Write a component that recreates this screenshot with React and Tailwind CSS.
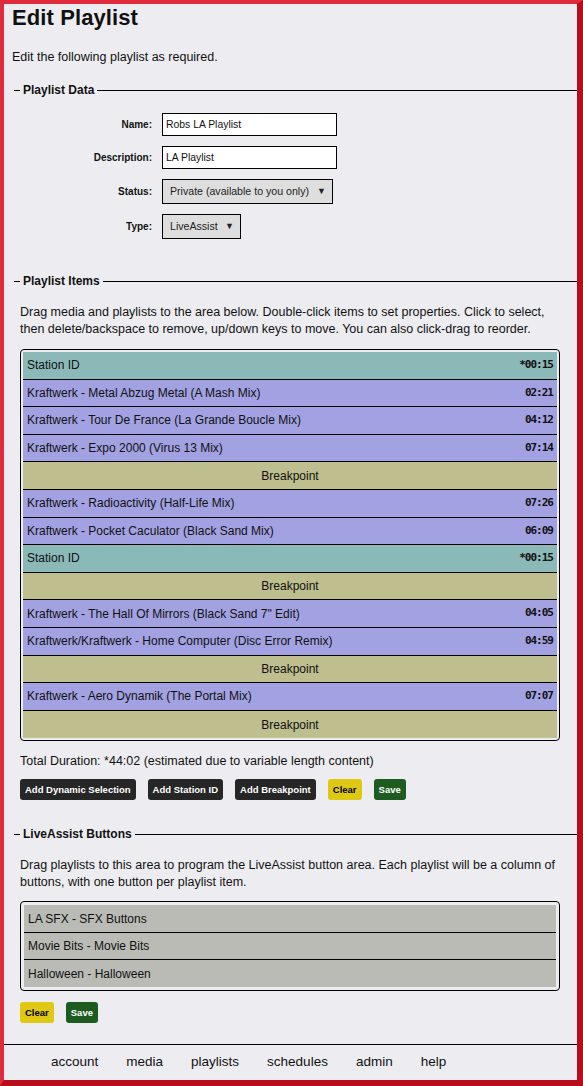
const ITEMS = [
  { kind: "id", title: "Station ID", dur: "*00:15" },
  { kind: "media", title: "Kraftwerk - Metal Abzug Metal (A Mash Mix)", dur: "02:21" },
  { kind: "media", title: "Kraftwerk - Tour De France (La Grande Boucle Mix)", dur: "04:12" },
  { kind: "media", title: "Kraftwerk - Expo 2000 (Virus 13 Mix)", dur: "07:14" },
  { kind: "break", title: "Breakpoint" },
  { kind: "media", title: "Kraftwerk - Radioactivity (Half-Life Mix)", dur: "07:26" },
  { kind: "media", title: "Kraftwerk - Pocket Caculator (Black Sand Mix)", dur: "06:09" },
  { kind: "id", title: "Station ID", dur: "*00:15" },
  { kind: "break", title: "Breakpoint" },
  { kind: "media", title: "Kraftwerk - The Hall Of Mirrors (Black Sand 7\" Edit)", dur: "04:05" },
  { kind: "media", title: "Kraftwerk/Kraftwerk - Home Computer (Disc Error Remix)", dur: "04:59" },
  { kind: "break", title: "Breakpoint" },
  { kind: "media", title: "Kraftwerk - Aero Dynamik (The Portal Mix)", dur: "07:07" },
  { kind: "break", title: "Breakpoint" }
];

const ROW_BG = {
  id: "bg-[#8bb9b8]",
  media: "bg-[#a2a2e2]",
  break: "bg-[#bebe8e]"
};

const LA_ROWS = ["LA SFX - SFX Buttons", "Movie Bits - Movie Bits", "Halloween - Halloween"];

const NAV = ["account", "media", "playlists", "schedules", "admin", "help"];

function Legend({ children, className = "" }) {
  return (
    <div className={`flex items-center h-[14px] ${className}`}>
      <div className="w-[6px] h-px bg-black" />
      <span className="px-[3px] text-[12px] font-bold leading-[14px]">{children}</span>
      <div className="flex-1 h-px bg-black" />
    </div>
  );
}

function Field({ label, children }) {
  return (
    <div className="flex items-center">
      <label className="w-[139px] pr-[1px] text-right text-[10px] font-bold">{label}</label>
      <div className="ml-[9px] flex">{children}</div>
    </div>
  );
}

function Select({ value, width }) {
  return (
    <div className={`flex h-[25px] items-center justify-between border border-black bg-[#dedede] pl-[7px] pr-[6px] text-[10.6px] text-[#222] ${width}`}>
      <span>{value}</span>
      <span className="text-[9px]">▼</span>
    </div>
  );
}

function Btn({ tone = "dark", children }) {
  const tones = {
    dark: "bg-[#262626] text-white",
    yellow: "bg-[#dfc813] text-black",
    green: "bg-[#1e5b20] text-white"
  };
  return (
    <button className={`h-[21px] rounded-[3px] px-[5px] text-[9.5px] font-bold leading-[21px] ${tones[tone]}`}>
      {children}
    </button>
  );
}

export default function App() {
  return (
    <div className="flex h-[1086px] flex-col border-l-4 border-t-4 border-r-[6px] border-b-[6px] border-l-[#e02b3c] border-t-[#e02b3c] border-r-[#b80d1a] border-b-[#b80d1a] bg-[#ededf1] font-['Liberation_Sans',Arial,sans-serif] text-[#111]">
      <div className="pl-[8px]">
        <h1 className="pt-[1px] text-[22px] font-bold leading-[26px] tracking-[0.1px]">Edit Playlist</h1>
        <p className="mt-[18px] text-[12.5px] leading-[17px]">Edit the following playlist as required.</p>

        <section className="ml-[2px] mt-[17px]">
          <Legend>Playlist Data</Legend>
          <div className="mt-[16px] flex flex-col gap-[10px]">
            <Field label="Name:">
              <input
                readOnly
                value="Robs LA Playlist"
                className="h-[23px] w-[175px] border border-black bg-white px-[3px] text-[10.4px] outline-none"
              />
            </Field>
            <Field label="Description:">
              <input
                readOnly
                value="LA Playlist"
                className="h-[23px] w-[175px] border border-black bg-white px-[3px] text-[10.4px] outline-none"
              />
            </Field>
            <Field label="Status:">
              <Select value="Private (available to you only)" width="w-[171px]" />
            </Field>
            <Field label="Type:">
              <Select value="LiveAssist" width="w-[79px]" />
            </Field>
          </div>
        </section>

        <section className="ml-[2px] mt-[35px]">
          <Legend>Playlist Items</Legend>
          <div className="pl-[6px] pr-[17px]">
            <p className="mt-[16px] text-[12.5px] leading-[17px]">
              Drag media and playlists to the area below. Double-click items to set properties. Click to select,
              <br />
              then delete/backspace to remove, up/down keys to move. You can also click-drag to reorder.
            </p>

            <div className="mt-[11px] rounded-[4px] border border-black p-[2px]">
              {ITEMS.map((item, i) => (
                <div
                  key={i}
                  className={`flex h-[27.6px] items-center px-[4px] text-[12px] ${ROW_BG[item.kind]} ${
                    i < ITEMS.length - 1 ? "border-b border-black" : ""
                  } ${item.kind === "break" ? "justify-center" : "justify-between"}`}
                >
                  <span>{item.title}</span>
                  {item.dur ? (
                    <span className="font-['DejaVu_Sans_Mono',monospace] text-[11px] font-bold tracking-[-1px]">
                      {item.dur}
                    </span>
                  ) : null}
                </div>
              ))}
            </div>

            <p className="mt-[12px] text-[12.5px] leading-[17px]">
              Total Duration: *44:02 (estimated due to variable length content)
            </p>

            <div className="mt-[9px] flex gap-[12px]">
              <Btn>Add Dynamic Selection</Btn>
              <Btn>Add Station ID</Btn>
              <Btn>Add Breakpoint</Btn>
              <Btn tone="yellow">Clear</Btn>
              <Btn tone="green">Save</Btn>
            </div>
          </div>
        </section>

        <section className="ml-[2px] mt-[27px]">
          <Legend>LiveAssist Buttons</Legend>
          <div className="pl-[6px] pr-[17px]">
            <p className="mt-[16px] text-[12.5px] leading-[17px]">
              Drag playlists to this area to program the LiveAssist button area. Each playlist will be a column of
              <br />
              buttons, with one button per playlist item.
            </p>

            <div className="mt-[10px] rounded-[4px] border border-black p-[3px]">
              {LA_ROWS.map((row, i) => (
                <div
                  key={row}
                  className={`flex h-[27.4px] items-center bg-[#babbb5] px-[4px] text-[12px] ${
                    i < LA_ROWS.length - 1 ? "border-b border-black" : ""
                  }`}
                >
                  {row}
                </div>
              ))}
            </div>

            <div className="mt-[11px] flex gap-[12px]">
              <Btn tone="yellow">Clear</Btn>
              <Btn tone="green">Save</Btn>
            </div>
          </div>
        </section>
      </div>

      <nav className="mt-auto flex h-[36px] items-center gap-[28px] border-t border-black pl-[47px] text-[13.5px]">
        {NAV.map((n) => (
          <a key={n} className="cursor-pointer">
            {n}
          </a>
        ))}
      </nav>
    </div>
  );
}
